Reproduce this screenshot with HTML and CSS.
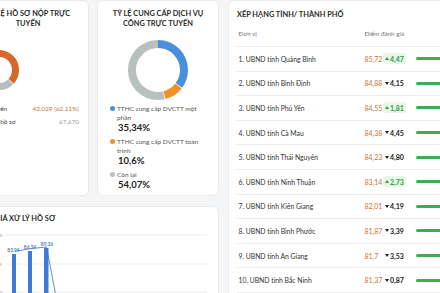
FILE: index.html
```html
<!DOCTYPE html>
<html lang="vi">
<head>
    <meta charset="UTF-8">
    <meta name="viewport" content="width=device-width, initial-scale=1.0">
    <title>Thống kê dịch vụ công</title>
    <link rel="stylesheet" href="styles.css">
</head>
<body>
    <div class="dashboard">
        <div class="left-col">
            <div class="top-row">
                <section class="card card-online">
                    <h2 class="card-title">TỶ LỆ HỒ SƠ NỘP TRỰC<br>TUYẾN</h2>
                    <div class="chart">
                        <svg width="44" height="60" viewBox="0 0 44 60">
                            <g transform="rotate(180 22 30)" fill="none" stroke-width="7">
                                <circle cx="22" cy="30" r="16.5" stroke="#d4692a" stroke-dasharray="63.8 39.9" />
                                <circle cx="22" cy="30" r="16.5" stroke="#b4bdc0" stroke-dasharray="38.7 65" stroke-dashoffset="-64.39" />
                            </g>
                        </svg>
                    </div>
                    <div class="stat-list">
                        <div class="stat-row">
                            <span>Trực tuyến</span>
                            <span class="stat-online">42.029 (62,11%)</span>
                        </div>
                        <div class="stat-row">
                            <span>Tổng số hồ sơ</span>
                            <span class="stat-total">67.670</span>
                        </div>
                    </div>
                </section>

                <section class="card card-service">
                    <h2 class="card-title">TỶ LỆ CUNG CẤP DỊCH VỤ<br>CÔNG TRỰC TUYẾN</h2>
                    <div class="chart">
                        <svg width="60" height="60" viewBox="0 0 60 60">
                            <g transform="rotate(-90 30 30)" fill="none" stroke-width="8">
                                <circle cx="30" cy="30" r="26" stroke="#4a8fdc" stroke-dasharray="57.1 106.3" />
                                <circle cx="30" cy="30" r="26" stroke="#f29126" stroke-dasharray="16.7 146.7" stroke-dashoffset="-57.73" />
                                <circle cx="30" cy="30" r="26" stroke="#b9c0c0" stroke-dasharray="87.7 75.7" stroke-dashoffset="-75.05" />
                            </g>
                        </svg>
                    </div>
                    <ul class="legend">
                        <li>
                            <span class="dot blue"></span>
                            <span class="legend-label">TTHC cung cấp DVCTT một phần</span>
                            <strong>35,34%</strong>
                        </li>
                        <li>
                            <span class="dot orange"></span>
                            <span class="legend-label">TTHC cung cấp DVCTT toàn trình</span>
                            <strong>10,6%</strong>
                        </li>
                        <li>
                            <span class="dot grey"></span>
                            <span class="legend-label">Còn lại</span>
                            <strong>54,07%</strong>
                        </li>
                    </ul>
                </section>
            </div>

            <section class="card card-process">
                <h2 class="card-title">ĐÁNH GIÁ XỬ LÝ HỒ SƠ</h2>
                <svg class="bar-chart" width="250" height="80" viewBox="0 0 250 80">
                    <g class="grid">
                        <line x1="37" y1="8" x2="239" y2="8" />
                        <line x1="37" y1="37" x2="239" y2="37" />
                        <line x1="37" y1="65" x2="239" y2="65" />
                    </g>
                    <g class="axis">
                        <text x="34" y="9.5">100</text>
                        <text x="34" y="38.5">75</text>
                        <text x="34" y="66.5">50</text>
                    </g>
                    <g class="bars">
                        <rect x="44" y="27" width="4" height="60" />
                        <rect x="60" y="24" width="4" height="60" />
                        <rect x="76" y="21" width="4.5" height="60" />
                    </g>
                    <polyline class="trend" points="47,24.5 62,21.7 78.5,20 87,64 88,80" />
                    <g class="values">
                        <text x="45.5" y="24.5">83.94</text>
                        <text x="62" y="21.5">86.34</text>
                        <text x="79" y="18.5">89.36</text>
                    </g>
                </svg>
            </section>
        </div>

        <section class="card card-rank">
            <h2 class="card-title">XẾP HẠNG TỈNH/ THÀNH PHỐ</h2>
            <div class="rank-head">
                <span>Đơn vị</span>
                <span class="head-score">Điểm đánh giá</span>
            </div>
            <div class="rank-row">
                <span>1. UBND tỉnh Quảng Bình</span>
                <span class="score">85,72</span>
                <span class="change up">4,47</span>
                <span class="bar"></span>
            </div>
            <div class="rank-row">
                <span>2. UBND tỉnh Bình Định</span>
                <span class="score">84,88</span>
                <span class="change down">4,15</span>
                <span class="bar"></span>
            </div>
            <div class="rank-row">
                <span>3. UBND tỉnh Phú Yên</span>
                <span class="score">84,55</span>
                <span class="change up">1,81</span>
                <span class="bar"></span>
            </div>
            <div class="rank-row">
                <span>4. UBND tỉnh Cà Mau</span>
                <span class="score">84,38</span>
                <span class="change down">4,45</span>
                <span class="bar"></span>
            </div>
            <div class="rank-row">
                <span>5. UBND tỉnh Thái Nguyên</span>
                <span class="score">84,23</span>
                <span class="change down">4,80</span>
                <span class="bar"></span>
            </div>
            <div class="rank-row">
                <span>6. UBND tỉnh Ninh Thuận</span>
                <span class="score">83,14</span>
                <span class="change up">2,73</span>
                <span class="bar"></span>
            </div>
            <div class="rank-row">
                <span>7. UBND tỉnh Kiên Giang</span>
                <span class="score">82,01</span>
                <span class="change down">4,19</span>
                <span class="bar"></span>
            </div>
            <div class="rank-row">
                <span>8. UBND tỉnh Bình Phước</span>
                <span class="score">81,87</span>
                <span class="change down">3,39</span>
                <span class="bar"></span>
            </div>
            <div class="rank-row">
                <span>9. UBND tỉnh An Giang</span>
                <span class="score">81,7</span>
                <span class="change down">3,53</span>
                <span class="bar"></span>
            </div>
            <div class="rank-row">
                <span>10. UBND tỉnh Bắc Ninh</span>
                <span class="score">81,37</span>
                <span class="change down">0,87</span>
                <span class="bar"></span>
            </div>
        </section>
    </div>
</body>
</html>
```

FILE: styles.css
```css
html, body {
    width: 440px;
    height: 293px;
    overflow: hidden;
}

body {
    margin: 0;
    background-color: #f4f5f7;
    font-family: Lato, "Noto Sans", sans-serif;
    color: #333;
}

.dashboard {
    display: grid;
    grid-template-columns: 252px 320px;
    column-gap: 9px;
    margin-left: -33px;
}

.left-col {
    display: flex;
    flex-direction: column;
    gap: 10px;
}

.top-row {
    display: grid;
    grid-template-columns: 1fr 1fr;
    gap: 8px;
}

.card {
    background-color: #fff;
    border: 1px solid #ebebeb;
    border-radius: 6px;
    box-sizing: border-box;
}

.card-title {
    margin: 0;
    font-size: 7.4px;
    line-height: 10px;
    font-weight: 700;
    color: #2b2b2b;
}

/* hai thẻ biểu đồ tròn */
.top-row .card {
    height: 196px;
    padding: 8px 9px;
}

.top-row .card-title {
    text-align: center;
}

.chart {
    display: flex;
    justify-content: center;
    height: 60px;
    margin-top: 11px;
}

.chart svg {
    display: block;
}

.card-online .chart {
    justify-content: flex-start;
}

.stat-list {
    display: flex;
    flex-direction: column;
    gap: 4px;
    margin-top: 3.5px;
    font-size: 6.4px;
    line-height: 9px;
    color: #444;
}

.stat-row {
    display: flex;
    justify-content: space-between;
}

.stat-online {
    color: #cc7433;
}

.stat-total {
    color: #9a9a9a;
}

.legend {
    list-style: none;
    margin: 3.5px 8px 0 3px;
    padding: 0;
    display: flex;
    flex-direction: column;
    gap: 3px;
}

.legend li {
    display: grid;
    grid-template-columns: 5px 1fr;
    column-gap: 2px;
    font-size: 6.5px;
    line-height: 9px;
    color: #555;
}

.dot {
    width: 5px;
    height: 5px;
    border-radius: 50%;
    margin-top: 2px;
}

.dot.blue { background-color: #4a8fdc; }
.dot.orange { background-color: #f29126; }
.dot.grey { background-color: #b9c0c0; }

.legend strong {
    grid-column: 2;
    font-size: 9.5px;
    line-height: 12px;
    color: #222;
    margin-left: 1px;
}

/* biểu đồ cột */
.card-process {
    height: 110px;
    padding: 7px 0 0 3px;
}

.bar-chart {
    display: block;
    margin: 3px 0 0 -3px;
}

.grid line {
    stroke: #eeeeee;
    stroke-width: 1;
}

.axis text {
    font-size: 4.5px;
    fill: #999;
    text-anchor: end;
}

.bars rect {
    fill: #3b7dd8;
}

.trend {
    fill: none;
    stroke: #3a72c4;
    stroke-width: 0.8;
}

.values text {
    font-size: 4.8px;
    font-weight: 700;
    fill: #4a7fc9;
    text-anchor: middle;
}

/* bảng xếp hạng */
.card-rank {
    height: 320px;
    padding: 9px 0 0 8px;
}

.rank-head,
.rank-row {
    display: grid;
    grid-template-columns: 126px 20px 31px 1fr;
    align-items: center;
    box-sizing: border-box;
    border-bottom: 1px solid #ececec;
    padding-left: 1.5px;
}

.rank-head {
    height: 27px;
    font-size: 6.3px;
    color: #777;
}

.head-score {
    grid-column: 2 / span 3;
}

.rank-row {
    height: 24.6px;
    font-size: 6.8px;
    color: #333;
}

.score {
    font-size: 7px;
    color: #cc7433;
}

.change {
    justify-self: start;
    display: inline-flex;
    align-items: center;
    gap: 1.5px;
    margin-left: -2px;
    padding: 1.5px 2px;
    border-radius: 2px;
    font-size: 7px;
    font-weight: 700;
}

.change::before {
    content: "";
    border-left: 2px solid transparent;
    border-right: 2px solid transparent;
}

.change.up {
    color: #2f9e44;
    background-color: #e8f7ea;
}

.change.up::before {
    border-bottom: 3px solid #2f9e44;
}

.change.down {
    color: #222;
}

.change.down::before {
    border-top: 3px solid #222;
}

.bar {
    height: 3px;
    border-radius: 2px;
    background-color: #45ab52;
}
```
